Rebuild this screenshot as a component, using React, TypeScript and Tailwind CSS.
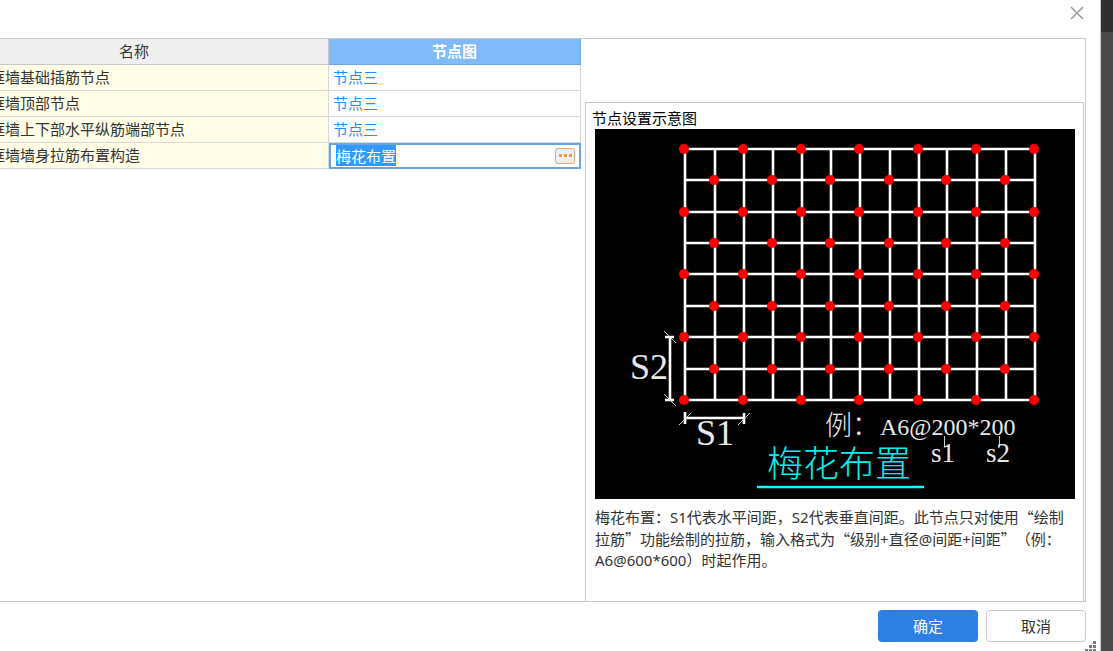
import { useEffect, useRef, useState } from 'react';

const rows = [
  { id: 'base', name: '框墙基础插筋节点', node: '节点三' },
  { id: 'top', name: '框墙顶部节点', node: '节点三' },
  { id: 'end', name: '框墙上下部水平纵筋端部节点', node: '节点三' },
];

// grid lines of the rebar layout, in diagram units
const gridX = [90, 120, 149, 178, 207, 236, 265, 295, 324, 352, 382, 411, 440];
const gridY = [20, 51, 83, 114, 145, 177, 208, 240, 271];

function NodeDiagram() {
  return (
    <svg viewBox="0 0 480 370" className="block w-full bg-black" role="img" aria-label="梅花布置">
      <g stroke="#fff" strokeWidth="2.6">
        {gridX.map(x => <line key={x} x1={x} y1={gridY[0]} x2={x} y2={272} />)}
        {gridY.map(y => <line key={y} x1={gridX[0]} y1={y} x2={440} y2={y} />)}
      </g>
      <g fill="#f00">
        {gridX.map((x, i) =>
          gridY.map((y, j) => (i + j) % 2 === 0 && <circle key={`${x}-${y}`} cx={x - 1} cy={y} r="5" />)
        )}
      </g>

      {/* dimension lines */}
      <g stroke="#fff" strokeWidth="2.6">
        <path d="M75 208V271M70 208H79M70 271H79" />
        <path d="M90 289H149M90 283V295M149 284V295" />
      </g>
      <g stroke="#ccc" strokeWidth="1">
        <path d="M69 202L81 214M69 265L81 277" />
        <path d="M84 296L96 284M143 296L155 284" />
        <path d="M349.5 307V318M404.5 307V318" />
      </g>

      <g fill="#e8e8e8" className="font-['Liberation_Serif','Noto_Sans_CJK_SC',serif] font-light">
        <text x="35" y="250" fontSize="36">S2</text>
        <text x="101" y="316" fontSize="36">S1</text>
        <text x="230" y="306" fontSize="27">例：</text>
        <text x="285" y="306" fontSize="24">A6@200*200</text>
        <text x="336" y="333" fontSize="27">s1</text>
        <text x="391" y="333" fontSize="27">s2</text>
        <text x="172" y="348" fontSize="36" fill="#00f0f0">梅花布置</text>
      </g>
      <line x1="162" y1="358" x2="329" y2="358" stroke="#0ff" strokeWidth="2.6" />
    </svg>
  );
}

// full-width quote mark
const Quote = ({ children }: { children: string }) => (
  <span className="font-['Noto_Sans_CJK_SC',sans-serif]">{children}</span>
);

export default function App() {
  const [value, setValue] = useState('梅花布置');
  const inputRef = useRef<HTMLInputElement>(null);

  useEffect(() => {
    inputRef.current?.focus();
    inputRef.current?.select();
  }, []);

  return (
    <div className="flex min-h-screen bg-[#4a4a4a] font-['Noto_Sans','Noto_Sans_CJK_SC',sans-serif] text-[15px] text-[#333]">
      <div className="relative flex min-w-0 flex-1 flex-col border-r border-[#c8c8c8] bg-white">
        <div className="flex h-[38px] items-start justify-end pt-[5px] pr-[15px]">
          <button aria-label="关闭" className="flex h-4 w-4 items-center justify-center text-[#999]">
            <svg width="14" height="14" viewBox="0 0 14 14" stroke="currentColor" strokeWidth="1.5">
              <path d="M1 1L13 13M13 1L1 13" />
            </svg>
          </button>
        </div>

        <div className="mr-[14px] flex flex-1 border border-l-0 border-[#c8c8c8]">
          <div className="min-w-0 flex-1 overflow-hidden pr-1">
            {/* the first column runs out of the left side of the view */}
            <div className="-ml-[60px]">
              <table className="w-full table-fixed border-collapse leading-5">
                <thead>
                  <tr className="h-[25px]">
                    <th className="border-r border-b border-[#c8c8c8] bg-[#efefef] p-0 font-normal">名称</th>
                    <th className="w-[252px] border border-t-0 border-[#6aa8e8] bg-[#80baf9] p-0 font-bold text-white">节点图</th>
                  </tr>
                </thead>
                <tbody>
                  {rows.map(r => (
                    <tr key={r.id} className="h-[26px]">
                      <td className="border-r border-b border-[#d8d8d8] bg-[#fffde6] py-0 pr-0 pl-[50px]">{r.name}</td>
                      <td className="border-r border-b border-[#d8d8d8] py-0 pr-0 pl-1">
                        <a href="#node" className="text-[#1e90ff]">{r.node}</a>
                      </td>
                    </tr>
                  ))}
                  <tr className="h-[26px]">
                    <td className="border-r border-b border-[#d8d8d8] bg-[#fffde6] py-0 pr-0 pl-[50px]">框墙墙身拉筋布置构造</td>
                    <td className="p-0">
                      <div className="flex h-[26px] items-center border-2 border-[#66a5e6] pr-1 pl-[5px]">
                        <input
                          ref={inputRef}
                          aria-label="节点图"
                          value={value}
                          onChange={e => setValue(e.target.value)}
                          className="h-[21px] min-w-0 flex-1 outline-none selection:bg-[#3399ff] selection:text-white"
                        />
                        <button aria-label="选择节点" className="flex h-4 w-5 items-center justify-center rounded-[3px] border border-[#e6a868] bg-[#eef0f8]">
                          <svg width="14" height="4" viewBox="0 0 14 4" fill="#f59a3c">
                            <path d="M1 0h3v3h-3zM6 0h3v3h-3zM11 0h3v3h-3z" />
                          </svg>
                        </button>
                      </div>
                    </td>
                  </tr>
                </tbody>
              </table>
            </div>
          </div>

          <div className="mt-[63px] mr-px w-[499px] shrink-0 border border-b-0 border-[#c8c8c8] pr-2 pl-[9px]">
            <h2 className="-ml-[3px] pt-[5px] leading-[21px] text-black">节点设置示意图</h2>
            <NodeDiagram />
            <p className="pt-[7px] leading-[21px] [text-spacing-trim:space-all]">
              梅花布置：S1代表水平间距，S2代表垂直间距。此节点只对使用<Quote>“</Quote>绘制拉筋<Quote>”</Quote>功能绘制的拉筋，输入格式为<Quote>“</Quote>级别+直径@间距+间距<Quote>”</Quote>（例：A6@600*600）时起作用。
            </p>
          </div>
        </div>

        <div className="flex h-[49px] items-start justify-end gap-2 pt-2 pr-[14px]">
          <button className="h-8 w-[100px] rounded bg-[#2d7fe3] text-white">确定</button>
          <button className="h-8 w-[100px] rounded border border-[#c8c8c8] bg-white">取消</button>
        </div>

        {/* resize grip */}
        <svg width="12" height="10" viewBox="0 0 12 10" fill="#777c88" className="absolute right-[3px] bottom-0">
          <path d="M8 0h3v3h-3zM8 4h3v3h-3zM4 4h3v3h-3zM8 8h3v2h-3zM4 8h3v2h-3zM0 8h3v2h-3z" />
        </svg>
      </div>

      <div className="w-3">
        <div className="h-8 bg-[#303030]" />
      </div>
    </div>
  );
}
